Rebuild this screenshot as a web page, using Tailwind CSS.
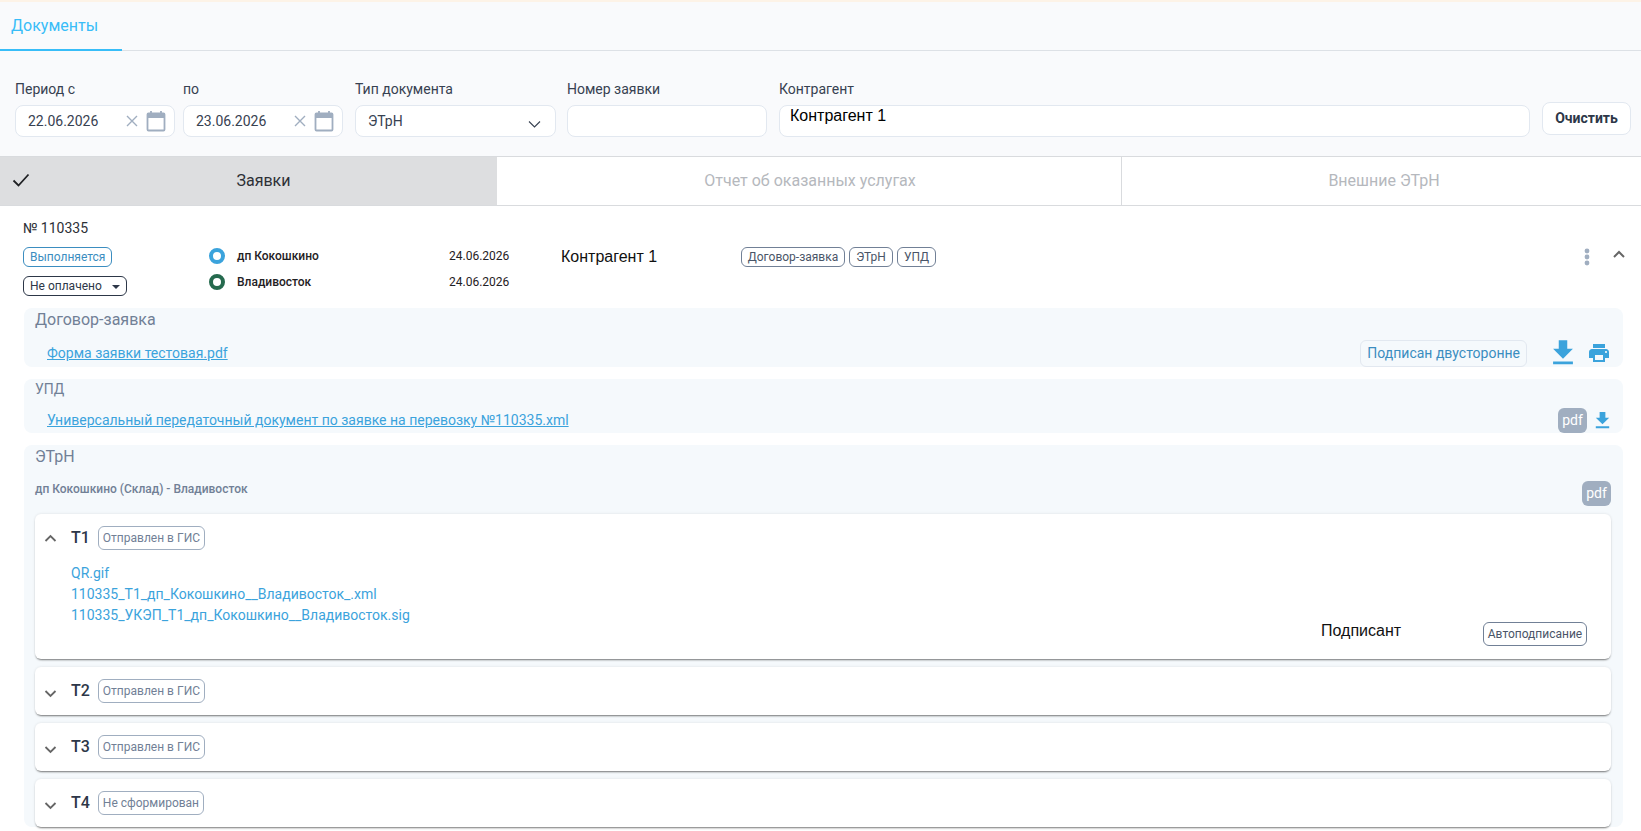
<!DOCTYPE html>
<html lang="ru">
<head>
	<meta charset="UTF-8" />
	<title>Документы</title>
	<script src="https://cdn.jsdelivr.net/npm/@tailwindcss/browser@4"></script>
</head>
<body class="h-screen overflow-hidden bg-white font-['Roboto',sans-serif] text-[#1f2937]">
	<!-- шапка и фильтры -->
	<header class="bg-[#f9fafc]">
		<div class="h-[2px] bg-[#fdf3e7]"></div>
		<div class="h-[49px] border-b border-[#dde1e6]">
			<div class="w-[122px] h-[49px] border-b-2 border-[#38bdf8] pl-[11px] pt-[13px] text-[16px] leading-[22px] text-[#38bdf8]">Документы</div>
		</div>
		<div class="flex items-end pl-[15px] pt-[28px] pb-[19px] text-[14px] text-[#374151]">
			<div class="w-[168px]">
				<div class="h-[20px] leading-[20px] mb-[6px]">Период с</div>
				<div class="flex items-center w-[160px] h-[32px] rounded-lg border border-[#e2e8f0] bg-white pl-[12px] text-[#374151]">
					<span class="w-[97px]">22.06.2026</span>
					<svg class="w-[14px] h-[14px] text-[#a0aec0]" viewBox="0 0 14 14" fill="none" stroke="currentColor" stroke-width="1.4"><path d="M2 2l10 10M12 2L2 12" /></svg>
					<svg class="ml-[7px] w-[20px] h-[22px] text-[#a0aec0]" viewBox="0 0 20 22" fill="none" stroke="currentColor" stroke-width="1.8"><rect x="1.5" y="3.5" width="17" height="17" rx="1" /><path d="M1.5 6h17" stroke-width="4" /><path d="M5 1v3M15 1v3" /></svg>
				</div>
			</div>
			<div class="w-[172px]">
				<div class="h-[20px] leading-[20px] mb-[6px]">по</div>
				<div class="flex items-center w-[160px] h-[32px] rounded-lg border border-[#e2e8f0] bg-white pl-[12px] text-[#374151]">
					<span class="w-[97px]">23.06.2026</span>
					<svg class="w-[14px] h-[14px] text-[#a0aec0]" viewBox="0 0 14 14" fill="none" stroke="currentColor" stroke-width="1.4"><path d="M2 2l10 10M12 2L2 12" /></svg>
					<svg class="ml-[7px] w-[20px] h-[22px] text-[#a0aec0]" viewBox="0 0 20 22" fill="none" stroke="currentColor" stroke-width="1.8"><rect x="1.5" y="3.5" width="17" height="17" rx="1" /><path d="M1.5 6h17" stroke-width="4" /><path d="M5 1v3M15 1v3" /></svg>
				</div>
			</div>
			<div class="w-[212px]">
				<div class="h-[20px] leading-[20px] mb-[6px]">Тип документа</div>
				<div class="flex items-center justify-between w-[201px] h-[32px] rounded-lg border border-[#e2e8f0] bg-white pl-[12px] pr-[14px]">
					<span>ЭТрН</span>
					<svg class="w-[13px] h-[8px] mt-[6px] text-[#374151]" viewBox="0 0 13 8" fill="none" stroke="currentColor" stroke-width="1.1"><path d="M1 1.5l5.5 5.5L12 1.5" /></svg>
				</div>
			</div>
			<div class="w-[212px]">
				<div class="h-[20px] leading-[20px] mb-[6px]">Номер заявки</div>
				<div class="w-[200px] h-[32px] rounded-lg border border-[#e2e8f0] bg-white"></div>
			</div>
			<div class="w-[763px]">
				<div class="h-[20px] leading-[20px] mb-[6px]">Контрагент</div>
				<div class="w-[751px] h-[32px] rounded-lg border border-[#e2e8f0] bg-white pl-[10px] font-['Liberation_Sans',sans-serif] text-[16px] leading-[20px] text-black">Контрагент 1</div>
			</div>
			<button class="w-[89px] h-[33px] mb-[2px] rounded-lg border border-[#e2e8f0] bg-white text-[14px] font-bold text-[#2d3748]">Очистить</button>
		</div>
	</header>

	<!-- вкладки -->
	<nav class="flex h-[50px] border-y border-[#d9dbde] text-[16px] text-[#b5b8bd]">
		<div class="relative w-[497px] flex items-center justify-center pl-[30px] bg-[#dddee0] text-[#2d3036]">
			<svg class="absolute left-[12px] top-[15px] w-[18px] h-[16px]" viewBox="0 0 18 16" fill="none" stroke="#1f2124" stroke-width="1.8"><path d="M1.5 8.5l5 5L16.5 2.5" /></svg>
			Заявки
		</div>
		<div class="w-[625px] flex items-center justify-center pl-[2px] border-r border-[#d9dbde]">Отчет об оказанных услугах</div>
		<div class="flex-1 flex items-center justify-center pl-[5px]">Внешние ЭТрН</div>
	</nav>

	<main>
		<!-- заявка -->
		<div class="pl-[23px] pt-[13px] text-[14px] leading-[18px] text-[#2d3036]">№ 110335</div>
		<div class="relative flex h-[71px] pl-[23px] pt-[10px]">
			<div class="w-[186px]">
				<div class="w-fit h-[20px] rounded-md border border-[#3b8dc0] px-[6px] text-[12px] leading-[18px] text-[#3b8dc0]">Выполняется</div>
				<div class="flex items-center w-fit h-[20px] mt-[9px] rounded-md border border-[#2d3748] pl-[6px] pr-[6px] text-[12px] text-[#2d3748]">
					Не оплачено
					<span class="ml-[10px] mt-[2px] w-0 h-0 border-x-[4px] border-x-transparent border-t-[4px] border-t-[#2d3748]"></span>
				</div>
			</div>
			<div class="w-[352px] text-[12px] text-[#1f2124]">
				<div class="flex items-center h-[17px]">
					<span class="w-[16px] h-[16px] rounded-full border-[4px] border-[#3ba3dc]"></span>
					<span class="w-[212px] ml-[12px] font-medium">дп Кокошкино</span>
					<span>24.06.2026</span>
				</div>
				<div class="flex items-center h-[17px] mt-[9px]">
					<span class="w-[16px] h-[16px] rounded-full border-[4px] border-[#256a4e]"></span>
					<span class="w-[212px] ml-[12px] font-medium">Владивосток</span>
					<span>24.06.2026</span>
				</div>
			</div>
			<div class="w-[180px] h-[20px] font-['Liberation_Sans',sans-serif] text-[16px] leading-[20px] text-[#111]">Контрагент 1</div>
			<div class="flex gap-[4px] h-[20px] text-[12px] leading-[18px] text-[#4a5568]">
				<span class="w-[104px] rounded-md border border-[#718096] text-center">Договор-заявка</span>
				<span class="w-[44px] rounded-md border border-[#718096] text-center">ЭТрН</span>
				<span class="w-[39px] rounded-md border border-[#718096] text-center">УПД</span>
			</div>
			<svg class="absolute left-[1584px] top-[11px] w-[6px] h-[18px] text-[#a0aec0]" viewBox="0 0 6 18" fill="currentColor"><circle cx="3" cy="3" r="2.4" /><circle cx="3" cy="9" r="2.4" /><circle cx="3" cy="15" r="2.4" /></svg>
			<svg class="absolute left-[1613px] top-[13px] w-[12px] h-[8px] text-[#666]" viewBox="0 0 12 8" fill="none" stroke="currentColor" stroke-width="2"><path d="M1 7l5-5 5 5" /></svg>
		</div>

		<!-- документы -->
		<div class="ml-[24px] mr-[18px]">
			<section class="h-[59px] rounded-lg bg-[#f5f9fc] pl-[11px]">
				<div class="text-[16px] leading-[24px] text-[#718096]">Договор-заявка</div>
				<div class="flex items-center h-[42px]">
					<a class="ml-[12px] text-[14px] text-[#3ba3dc] underline">Форма заявки тестовая.pdf</a>
					<span class="ml-auto h-[27px] rounded-md border border-[#e2e8f0] px-[6px] text-[14px] leading-[25px] text-[#3b8dc0]">Подписан двусторонне</span>
					<svg class="ml-[19px] w-[34px] h-[34px] text-[#3ba3dc]" viewBox="0 0 24 24" fill="currentColor"><path d="M19 9h-4V3H9v6H5l7 7 7-7zM5 18v2h14v-2H5z" /></svg>
					<svg class="ml-[7px] mr-[12px] w-[24px] h-[24px] text-[#3ba3dc]" viewBox="0 0 24 24" fill="currentColor"><path d="M19 8H5c-1.66 0-3 1.34-3 3v6h4v4h12v-4h4v-6c0-1.66-1.34-3-3-3zm-3 11H8v-5h8v5zm3-7c-.55 0-1-.45-1-1s.45-1 1-1 1 .45 1 1-.45 1-1 1zm-1-9H6v4h12V3z" /></svg>
				</div>
			</section>
			<section class="h-[54px] mt-[12px] rounded-lg bg-[#f5f9fc] pl-[11px]">
				<div class="text-[14px] leading-[21px] text-[#718096]">УПД</div>
				<div class="flex items-center h-[41px]">
					<a class="ml-[12px] text-[14px] text-[#3ba3dc] underline">Универсальный передаточный документ по заявке на перевозку №110335.xml</a>
					<span class="ml-auto w-[29px] h-[25px] rounded-md bg-[#a0aec0] text-center text-[14px] leading-[25px] text-white">pdf</span>
					<svg class="ml-[4px] mr-[9px] w-[23px] h-[23px] text-[#3ba3dc]" viewBox="0 0 24 24" fill="currentColor"><path d="M19 9h-4V3H9v6H5l7 7 7-7zM5 18v2h14v-2H5z" /></svg>
				</div>
			</section>
			<section class="mt-[12px] rounded-lg bg-[#f5f9fc] pl-[11px] pr-[12px]">
				<div class="text-[16px] leading-[24px] text-[#718096]">ЭТрН</div>
				<div class="flex items-start justify-between h-[45px] pt-[12px]">
					<span class="text-[12px] font-medium leading-[16px] text-[#718096]">дп Кокошкино (Склад) - Владивосток</span>
					<span class="w-[29px] h-[25px] rounded-md bg-[#a0aec0] text-center text-[14px] leading-[25px] text-white">pdf</span>
				</div>

				<!-- транспортные разделы -->
				<div class="relative h-[145px] rounded-md bg-white shadow-[0_2px_2px_-1px_rgba(0,0,0,0.5),0_0_3px_rgba(0,0,0,0.1)]">
					<div class="flex items-center h-[47px] mb-[2px]">
						<svg class="ml-[9px] w-[13px] h-[8px] text-[#666]" viewBox="0 0 12 8" fill="none" stroke="currentColor" stroke-width="1.8"><path d="M1 7l5-5 5 5" /></svg>
						<span class="ml-[14px] text-[16px] font-medium text-[#2d3748]">Т1</span>
						<span class="ml-[8px] h-[24px] rounded-md border border-[#a0aec0] px-[4px] text-[12px] leading-[22px] text-[#718096]">Отправлен в ГИС</span>
					</div>
					<div class="ml-[36px] text-[14px] leading-[21px] text-[#3ba3dc]">
						<div>QR.gif</div>
						<div>110335_Т1_дп_Кокошкино__Владивосток_.xml</div>
						<div>110335_УКЭП_Т1_дп_Кокошкино__Владивосток.sig</div>
					</div>
					<span class="absolute left-[1286px] top-[107px] font-['Liberation_Sans',sans-serif] text-[16px] leading-[20px] text-[#111]">Подписант</span>
					<span class="absolute left-[1448px] top-[108px] w-[104px] h-[24px] rounded-md border border-[#718096] text-center text-[12px] leading-[22px] text-[#4a5568]">Автоподписание</span>
				</div>
				<div class="flex items-center h-[48px] mt-[8px] rounded-md bg-white shadow-[0_2px_2px_-1px_rgba(0,0,0,0.5),0_0_3px_rgba(0,0,0,0.1)]">
					<svg class="ml-[9px] mt-[6px] w-[13px] h-[8px] text-[#666]" viewBox="0 0 12 8" fill="none" stroke="currentColor" stroke-width="1.8"><path d="M1 1l5 5 5-5" /></svg>
					<span class="ml-[14px] text-[16px] font-medium text-[#2d3748]">Т2</span>
					<span class="ml-[8px] h-[24px] rounded-md border border-[#a0aec0] px-[4px] text-[12px] leading-[22px] text-[#718096]">Отправлен в ГИС</span>
				</div>
				<div class="flex items-center h-[48px] mt-[8px] rounded-md bg-white shadow-[0_2px_2px_-1px_rgba(0,0,0,0.5),0_0_3px_rgba(0,0,0,0.1)]">
					<svg class="ml-[9px] mt-[6px] w-[13px] h-[8px] text-[#666]" viewBox="0 0 12 8" fill="none" stroke="currentColor" stroke-width="1.8"><path d="M1 1l5 5 5-5" /></svg>
					<span class="ml-[14px] text-[16px] font-medium text-[#2d3748]">Т3</span>
					<span class="ml-[8px] h-[24px] rounded-md border border-[#a0aec0] px-[4px] text-[12px] leading-[22px] text-[#718096]">Отправлен в ГИС</span>
				</div>
				<div class="flex items-center h-[48px] mt-[8px] mb-[8px] rounded-md bg-white shadow-[0_2px_2px_-1px_rgba(0,0,0,0.5),0_0_3px_rgba(0,0,0,0.1)]">
					<svg class="ml-[9px] mt-[6px] w-[13px] h-[8px] text-[#666]" viewBox="0 0 12 8" fill="none" stroke="currentColor" stroke-width="1.8"><path d="M1 1l5 5 5-5" /></svg>
					<span class="ml-[14px] text-[16px] font-medium text-[#2d3748]">Т4</span>
					<span class="ml-[8px] h-[24px] rounded-md border border-[#a0aec0] px-[4px] text-[12px] leading-[22px] text-[#718096]">Не сформирован</span>
				</div>
			</section>
		</div>
	</main>
</body>
</html>
